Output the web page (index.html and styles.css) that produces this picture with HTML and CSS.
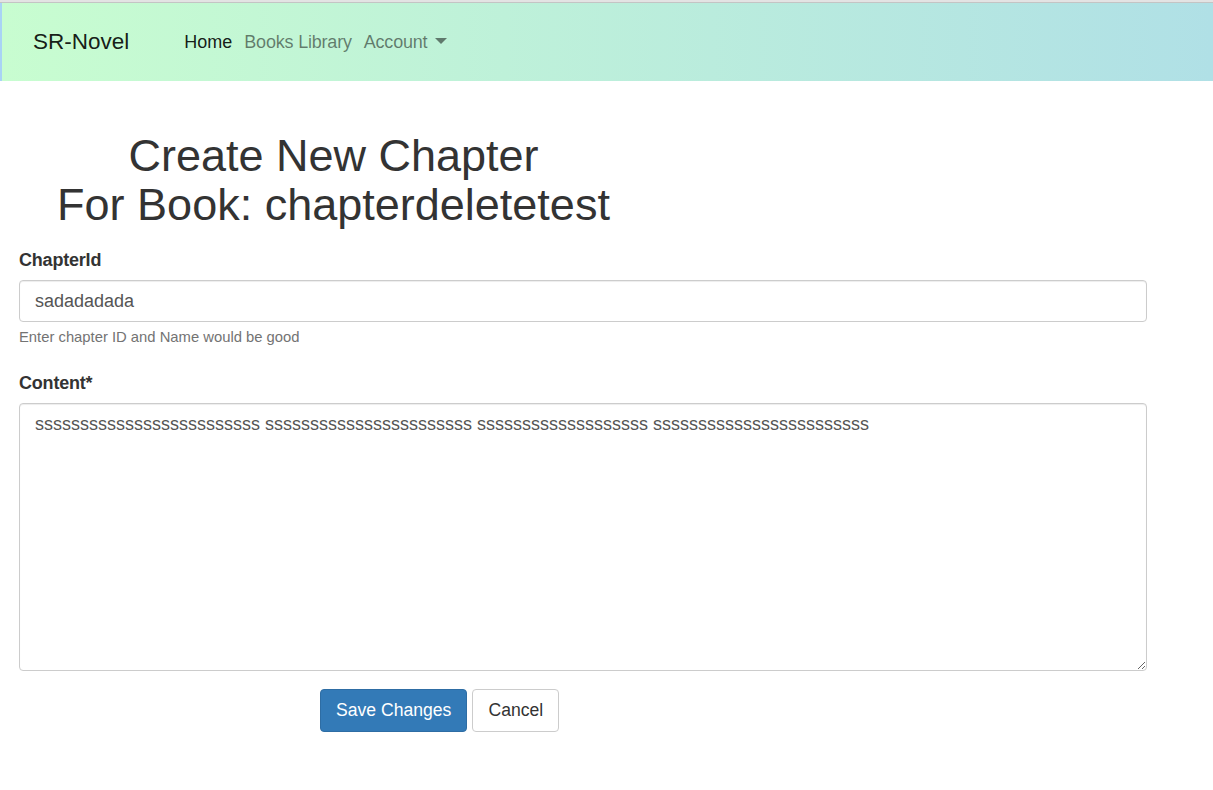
FILE: index.html
```html
<!DOCTYPE html>
<html>
<head>
<meta charset="utf-8">
<title>Create New Chapter</title>
<link rel="stylesheet" href="styles.css">
</head>
<body>
<div class="topline"></div>
<nav class="navbar">
  <a class="brand" href="#">SR-Novel</a>
  <ul class="nav">
    <li><a class="nav-link active" href="#">Home</a></li>
    <li><a class="nav-link" href="#">Books Library</a></li>
    <li><a class="nav-link dropdown" href="#">Account<span class="caret"></span></a></li>
  </ul>
</nav>
<main class="page">
  <div class="title-wrap">
    <h1 class="title">Create New Chapter<br>For Book: chapterdeletetest</h1>
  </div>
  <form class="form">
    <div class="group">
      <label class="label">ChapterId</label>
      <input class="control" type="text" value="sadadadada">
      <small class="help">Enter chapter ID and Name would be good</small>
    </div>
    <div class="group">
      <label class="label">Content*</label>
      <textarea class="control area">sssssssssssssssssssssssss sssssssssssssssssssssss sssssssssssssssssss ssssssssssssssssssssssss</textarea>
    </div>
    <div class="actions">
      <button type="button" class="btn btn-primary">Save Changes</button>
      <button type="button" class="btn btn-default">Cancel</button>
    </div>
  </form>
</main>
</body>
</html>
```

FILE: styles.css
```css
* { box-sizing: border-box; }
html, body { margin: 0; padding: 0; }
body {
  font-family: "Liberation Sans", Arial, sans-serif;
  color: #333;
  background: #fff;
  font-size: 18px;
}
.topline {
  height: 3px;
  background: #e3e3e3;
  border-bottom: 1px solid #c4c4c4;
}
.navbar {
  height: 78px;
  display: flex;
  align-items: center;
  padding-left: 33px;
  border-left: 2px solid #a9d3f5;
  background: linear-gradient(to right, #c8fdd0 0%, #b0e0e6 100%);
}
.brand {
  font-size: 22.5px;
  color: rgba(0,0,0,0.9);
  text-decoration: none;
  margin-right: 55px;
  margin-left: -2px;
}
.nav {
  list-style: none;
  display: flex;
  margin: 0;
  padding: 0;
}
.nav-link {
  display: block;
  font-size: 18px;
  padding: 0 6px;
  color: rgba(0,0,0,0.5);
  text-decoration: none;
  letter-spacing: -0.2px;
}
.nav li:first-child .nav-link { padding-left: 0; letter-spacing: 0; }
.nav-link.active { color: rgba(0,0,0,0.9); }
.caret {
  display: inline-block;
  margin-left: 8px;
  vertical-align: 4px;
  border-top: 6px solid rgba(0,0,0,0.5);
  border-left: 6px solid transparent;
  border-right: 6px solid transparent;
}
.page {
  padding: 0 66px 0 19px;
}
.title-wrap {
  width: 629px;
  padding-top: 50px;
  text-align: center;
}
.title {
  margin: 0;
  font-weight: normal;
  font-size: 45px;
  line-height: 49px;
  color: #333;
}
.form { margin-top: 18px; }
.group { margin-bottom: 22px; }
.label {
  display: block;
  font-weight: bold;
  font-size: 18px;
  line-height: 27px;
  margin-bottom: 6px;
  color: #333;
  letter-spacing: -0.2px;
}
.control {
  display: block;
  width: 100%;
  height: 42px;
  padding: 6px 15px;
  font-family: inherit;
  font-size: 18px;
  color: #555;
  background: #fff;
  border: 1px solid #ccc;
  border-radius: 4px;
  box-shadow: inset 0 1px 1px rgba(0,0,0,0.075);
}
.area {
  height: 268px;
  padding: 7px 15px;
  resize: vertical;
  line-height: 1.5;
}
.help {
  display: block;
  margin-top: 4px;
  font-size: 14.8px;
  line-height: 1.5;
  color: #737373;
}
.actions {
  display: flex;
  gap: 5px;
  margin-top: -4px;
  padding-left: 301px;
}
.btn {
  height: 43px;
  padding: 0 15px;
  font-family: inherit;
  font-size: 17.6px;
  border-radius: 4px;
  border: 1px solid transparent;
  cursor: pointer;
}
.btn-primary {
  background: #337ab7;
  border-color: #2e6da4;
  color: #fff;
}
.btn-default {
  background: #fff;
  border-color: #ccc;
  color: #333;
}
```
